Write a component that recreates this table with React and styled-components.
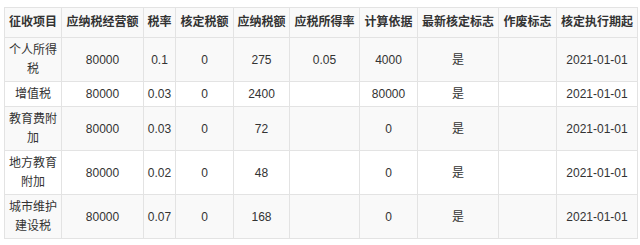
import React from "react";
import styled, { createGlobalStyle } from "styled-components";

const Global = createGlobalStyle`
  html, body { margin: 0; padding: 0; background: #fff; overflow: hidden; }
  body { font-family: "Liberation Sans", Arial, "Noto Sans CJK SC", sans-serif; }
`;

const Page = styled.div`
  padding: 7px 0 0 4px;
`;

const Table = styled.table`
  border-collapse: collapse;
  table-layout: fixed;
  width: ${(p) => p.$width}px;
  font-size: 12px;
  color: #333;
`;

const Th = styled.th`
  border: 1px solid #e3e3e3;
  background: #f9f9f9;
  font-weight: bold;
  line-height: 19px;
  padding: 5px 2px;
  text-align: center;
  white-space: nowrap;
`;

const Td = styled.td`
  border: 1px solid #e3e3e3;
  line-height: 19px;
  padding: 3px ${(p) => (p.$wrap ? 4 : 2)}px 2px;
  text-align: center;
  vertical-align: middle;
  white-space: ${(p) => (p.$wrap ? "normal" : "nowrap")};
  word-break: break-all;
`;

const Tr = styled.tr`
  background: ${(p) => (p.$striped ? "#f9f9f9" : "#fff")};
`;

const widths = [57, 82, 32, 58, 56, 70, 58, 81, 58, 81];
const headers = [
  "征收项目",
  "应纳税经营额",
  "税率",
  "核定税额",
  "应纳税额",
  "应税所得率",
  "计算依据",
  "最新核定标志",
  "作废标志",
  "核定执行期起",
];

const rows = [
  ["个人所得税", "80000", "0.1", "0", "275", "0.05", "4000", "是", "", "2021-01-01"],
  ["增值税", "80000", "0.03", "0", "2400", "", "80000", "是", "", "2021-01-01"],
  ["教育费附加", "80000", "0.03", "0", "72", "", "0", "是", "", "2021-01-01"],
  ["地方教育附加", "80000", "0.02", "0", "48", "", "0", "是", "", "2021-01-01"],
  ["城市维护建设税", "80000", "0.07", "0", "168", "", "0", "是", "", "2021-01-01"],
];

export default function App() {
  const total = widths.reduce((a, b) => a + b, 0);
  return (
    <>
      <Global />
      <Page>
        <Table $width={total}>
          <colgroup>
            {widths.map((w, i) => (
              <col key={i} style={{ width: w }} />
            ))}
          </colgroup>
          <thead>
            <Tr $striped>
              {headers.map((h) => (
                <Th key={h}>{h}</Th>
              ))}
            </Tr>
          </thead>
          <tbody>
            {rows.map((r, i) => (
              <Tr key={i} $striped={i % 2 === 0}>
                {r.map((c, j) => (
                  <Td key={j} $wrap={j === 0}>
                    {c}
                  </Td>
                ))}
              </Tr>
            ))}
          </tbody>
        </Table>
      </Page>
    </>
  );
}
